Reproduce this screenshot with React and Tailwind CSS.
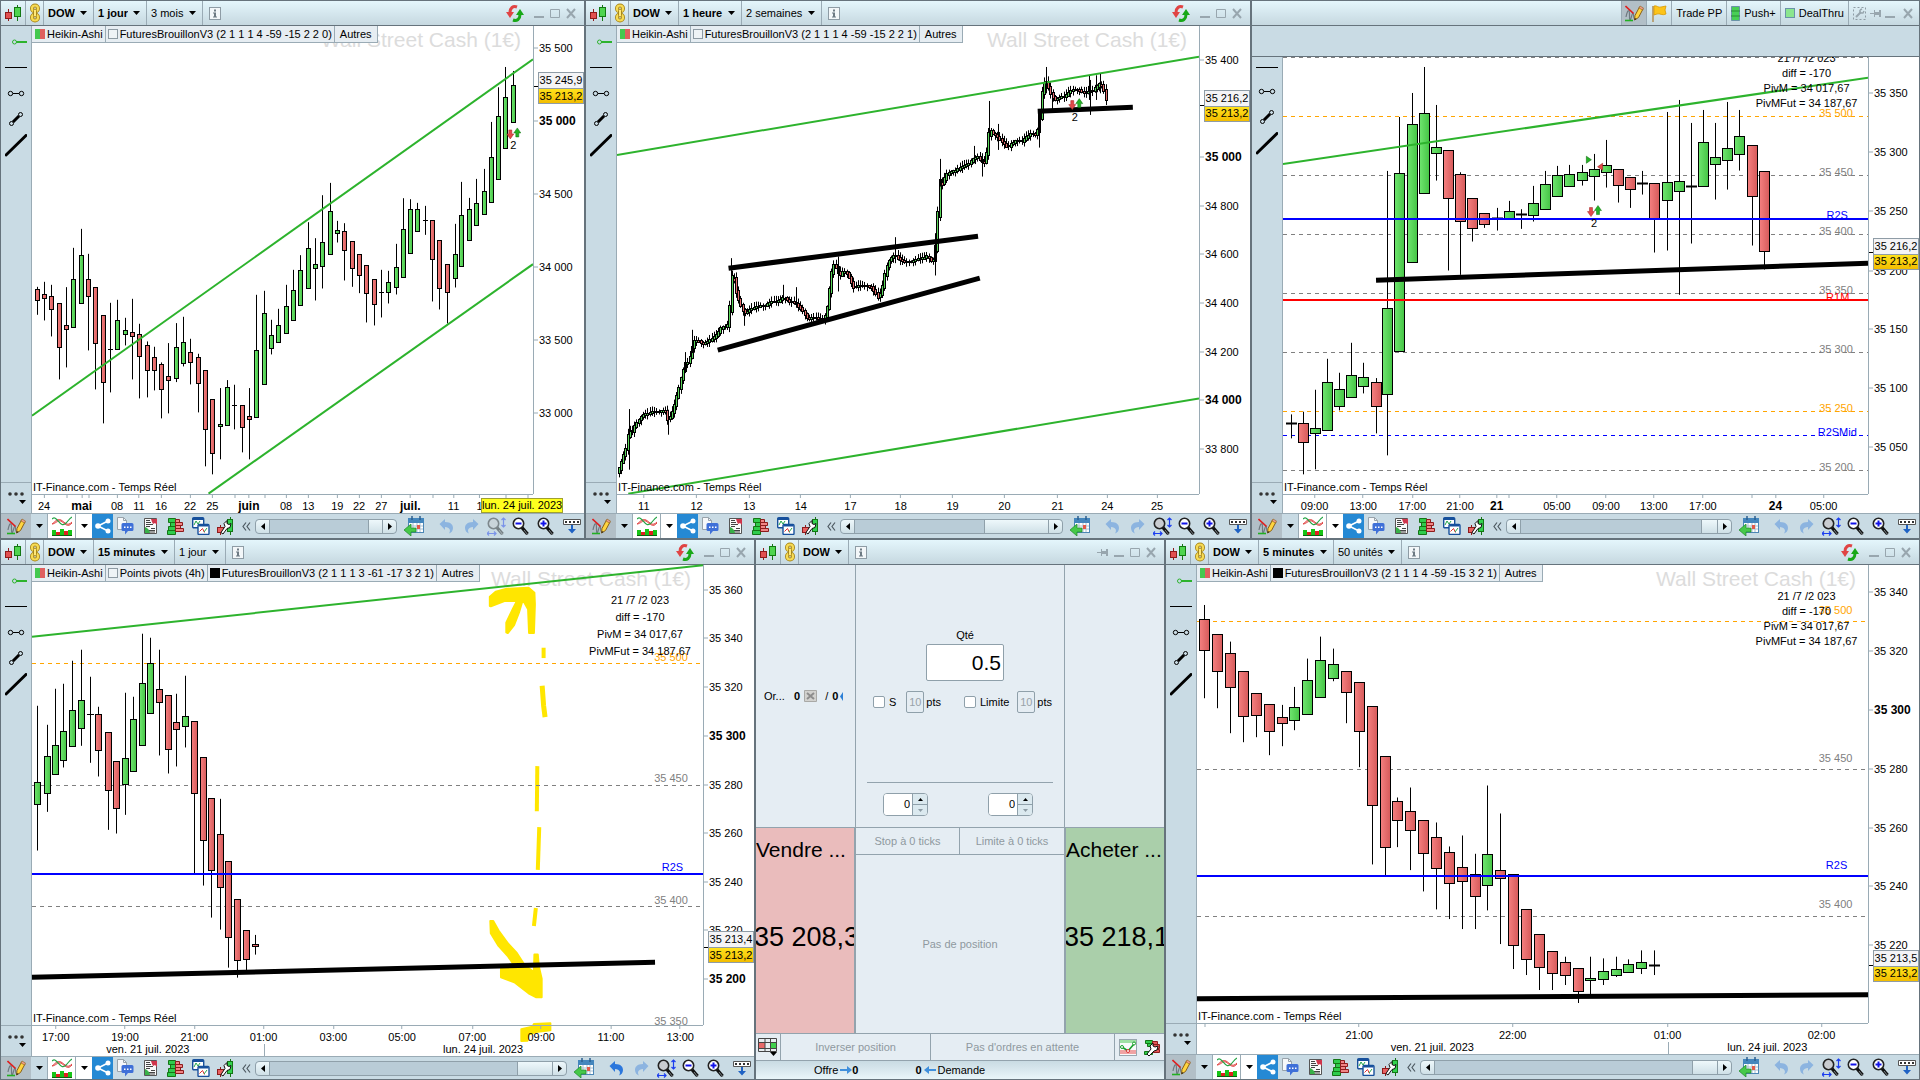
import React from "react";

const G = "g";
const R = "r";
const GREEN = "#2db32d";
const ORANGE = "#ffa500";
const GRAY = "#808080";
const BLUE = "#0000ff";

/* ---------- icons ---------- */

const Caret = ({ className = "" }) => (
  <svg className={className} width="7" height="4" viewBox="0 0 7 4" aria-hidden="true">
    <path d="M0 0h7L3.5 4z" fill="#000" />
  </svg>
);

const CandlesIcon = () => (
  <svg width="16" height="18" viewBox="0 0 16 18" aria-hidden="true">
    <path d="M3.5 5v12" stroke="#8e1b1b" />
    <rect x="0.5" y="8.5" width="6" height="6" fill="#e25050" stroke="#8e1b1b" />
    <path d="M12.5 1v16" stroke="#137813" />
    <rect x="9.5" y="3.5" width="6" height="9" fill="#4fd44f" stroke="#137813" />
  </svg>
);

const ChainIcon = () => (
  <svg width="12" height="20" viewBox="0 0 12 20" aria-hidden="true" fill="none">
    <g stroke="#a8871a" strokeWidth="4">
      <rect x="3" y="2.5" width="6" height="6" rx="3" />
      <rect x="3" y="11.5" width="6" height="6" rx="3" />
    </g>
    <g stroke="#f7dc55" strokeWidth="2.2">
      <rect x="3" y="2.5" width="6" height="6" rx="3" />
      <rect x="3" y="11.5" width="6" height="6" rx="3" />
    </g>
    <rect x="4.5" y="6" width="3" height="8" rx="1.5" fill="#ffe97a" stroke="#a8871a" />
  </svg>
);

const InfoIcon = () => (
  <svg width="12" height="13" viewBox="0 0 12 13" aria-hidden="true">
    <rect x="0.5" y="0.5" width="11" height="12" fill="#f3f7f9" stroke="#8e9ca5" />
    <path d="M5 2.5h2v2H5zM4 5.500h3v4h1v1H4v-1h1v-3H4z" fill="#6d7a83" />
  </svg>
);

const RefreshIcon = () => (
  <svg width="18" height="17" viewBox="0 0 18 17" aria-hidden="true" fill="none">
    <path d="M11 2C7 0.500 4 3 4 7.500" stroke="#e04444" strokeWidth="3" />
    <path d="M0 7h8l-4 6z" fill="#e04444" />
    <path d="M7 15c4 1.500 7-1 7-5.500" stroke="#18a818" strokeWidth="3" />
    <path d="M10 10h8l-4-6z" fill="#18a818" />
  </svg>
);

const MinIcon = () => (
  <svg width="10" height="11" viewBox="0 0 10 11" aria-hidden="true">
    <path d="M0 8h10v2H0z" fill="#98a6ae" />
  </svg>
);
const MaxIcon = () => (
  <svg width="10" height="11" viewBox="0 0 10 11" aria-hidden="true">
    <path d="M0.500 1.500h9v8h-9z" fill="none" stroke="#98a6ae" />
  </svg>
);
const CloseIcon = () => (
  <svg width="10" height="11" viewBox="0 0 10 11" aria-hidden="true">
    <path d="M1 1l8 9M9 1l-8 9" stroke="#98a6ae" strokeWidth="2" />
  </svg>
);
const PinIcon = () => (
  <svg width="11" height="9" viewBox="0 0 11 9" aria-hidden="true">
    <path d="M0 4h4v1H0zM4 1h1v7H4zM5 3h4v3H5zM9 1h2v7H9z" fill="#98a6ae" />
  </svg>
);
const WrenchBoxIcon = () => (
  <svg width="13" height="13" viewBox="0 0 13 13" aria-hidden="true" fill="none">
    <rect x="0.500" y="0.500" width="12" height="12" stroke="#8e9ca5" strokeDasharray="2 2" />
    <path d="M3 10l5-5" stroke="#98a6ae" strokeWidth="2" />
    <path d="M7 3v3h3l1-2M7 3l2-1" stroke="#98a6ae" strokeWidth="1.500" />
  </svg>
);

const PencilIcon = () => (
  <svg width="19" height="17" viewBox="0 0 19 17" aria-hidden="true" fill="none">
    <path d="M1 12c1-5 2-7 3-6s0 9 1 9 2-7 3-7 0 6 2 6" stroke="#6f7a80" strokeWidth="1.200" />
    <path d="M0.500 1l8 7.500" stroke="#e01c1c" strokeWidth="1.600" />
    <path d="M0 15.500h8" stroke="#22b022" strokeWidth="1.600" />
    <path d="M9.500 15l0.500-4.500 4.500-8.500 3.500 2-4.500 8.500z" fill="#ffd53f" stroke="#8a6118" />
    <path d="M14 3l3.500 2 1-2-3.500-2z" fill="#ef9d8c" stroke="#8a6118" strokeWidth="0.600" />
    <path d="M9.500 15.300l0.300-2.300 1.700 1z" fill="#222" />
  </svg>
);

const IndicatorIcon = () => (
  <svg width="20" height="20" viewBox="0 0 20 20" aria-hidden="true" fill="none">
    <path d="M0 8C3 6 5 2 9 4s6 7 11 2v1c-4 5-7 1-11-2-3-1-6 3-9 3z" fill="#f7b1b1" stroke="#e04a4a" />
    <path d="M0 3C4-1 6 7 10 8.500S16 3 20 1" stroke="#22a544" strokeWidth="1.200" />
    <path d="M0 14h4v5H0z M8 13h4v6H8z M16 14h4v5h-4z" fill="#17c417" />
    <path d="M4 16h4v3H4z M12 15h4v4h-4z" fill="#e02020" />
    <path d="M0 19.500h20" stroke="#0c600c" />
  </svg>
);

const ShareIcon = () => (
  <svg width="16" height="16" viewBox="0 0 16 16" aria-hidden="true">
    <path d="M3 8l10-5M3 8l10 5" stroke="#fff" strokeWidth="1.600" />
    <circle cx="3" cy="8" r="2.800" fill="#fff" />
    <circle cx="13" cy="3" r="2.500" fill="#fff" />
    <circle cx="13" cy="13" r="2.500" fill="#fff" />
  </svg>
);

const CommentIcon = () => (
  <svg width="17" height="18" viewBox="0 0 17 18" aria-hidden="true">
    <path d="M0.500 0.500h6l3 3v9h-9z" fill="#f6f8fa" stroke="#98a3ab" />
    <path d="M6.500 0.500v3h3" fill="none" stroke="#98a3ab" />
    <path d="M6 6h9q1.500 0 1.500 1.500v5q0 1.500-1.500 1.500h-4l-3 3.500V14H6q-1.500 0-1.500-1.500v-5Q4.500 6 6 6z" fill="#3f70d8" />
    <path d="M7 9.500h1.500v1.500H7zM10 9.500h1.500v1.500H10zM13 9.500h1.500v1.500H13z" fill="#fff" />
  </svg>
);

const NewsIcon = () => (
  <svg width="14" height="16" viewBox="0 0 14 16" aria-hidden="true">
    <path d="M0.500 0.500h12v15h-12z" fill="#fafafa" stroke="#555" />
    <path d="M2 2.500h4M2 4.500h5M2 6.500h7M2 8.500h4M7 10.500h4M5 12.500h6M5 14h6" stroke="#444" />
    <path d="M7 1h6v6l-2-2-2 1-1-2z" fill="#d0364c" />
    <path d="M1 15V9l2 1 2 2 1 3z" fill="#38b048" />
  </svg>
);

const BookIcon = () => (
  <svg width="17" height="17" viewBox="0 0 17 17" aria-hidden="true">
    <g stroke="#157515" fill="#2fcc4c">
      <path d="M1.500 0.500h7v4h-7zM3.500 4.500h5v4h-5zM1.500 8.500h7v4h-7zM0.500 12.500h8v4h-8z" />
    </g>
    <g stroke="#8d1c1c" fill="#f08585">
      <path d="M8.500 1.500h4v3h-4zM8.500 4.500h7v3h-7zM8.500 7.500h5v3h-5zM8.500 10.500h8v3h-8z" />
    </g>
  </svg>
);

const WindowsIcon = () => (
  <svg width="18" height="18" viewBox="0 0 18 18" aria-hidden="true" fill="none">
    <rect x="0.700" y="0.700" width="11" height="10" rx="1" fill="#fff" stroke="#17509c" strokeWidth="1.400" />
    <path d="M1 2h10" stroke="#17509c" strokeWidth="2" />
    <path d="M2 8l2-4 2 3 2-3" stroke="#23a54a" />
    <rect x="6" y="7.500" width="11" height="10" rx="1" fill="#fff" stroke="#17509c" strokeWidth="1.400" />
    <path d="M6.500 8.500h10" stroke="#17509c" strokeWidth="2" />
    <path d="M7.500 14.500l3-3 2 4" stroke="#d33" />
    <path d="M12 15l3-4" stroke="#23a54a" />
  </svg>
);

const TradeIcon = () => (
  <svg width="17" height="18" viewBox="0 0 17 18" aria-hidden="true">
    <path d="M13.500 0v18" stroke="#157515" />
    <rect x="10.500" y="2.500" width="5" height="12" fill="#33d24e" stroke="#157515" />
    <path d="M3.500 8v10" stroke="#8d1c1c" />
    <rect x="0.500" y="10.500" width="6" height="5" fill="#e96060" stroke="#8d1c1c" />
    <path d="M4 15.500l4-6-1-3 3-3v3l2 1 2-1-1 4-3 1-4 5.500z" fill="#fff" stroke="#111" />
  </svg>
);

const CalendarIcon = () => (
  <svg width="20" height="20" viewBox="0 0 20 20" aria-hidden="true">
    <rect x="4.500" y="2.500" width="15" height="14" fill="#fff" stroke="#4c86b5" />
    <path d="M4 2h16v5H4z" fill="#4486bd" />
    <path d="M8 0v4M16 0v4" stroke="#2b5f8e" strokeWidth="1.500" />
    <path d="M5 10h14M5 13h14M9 7v9M13 7v9M16 7v9" stroke="#a9bfd0" />
    <path d="M13 9h3v4h-3z" fill="#e25a4a" />
    <path d="M0 14l7-6v4h5v4H7v4z" fill="#46c84a" stroke="#1c8a26" strokeWidth="0.700" />
  </svg>
);

const UndoIcon = ({ on, flip }) => (
  <svg width="15" height="15" viewBox="0 0 15 15" aria-hidden="true" className={flip ? "-scale-x-100" : ""}>
    <path
      d="M0.500 5L6 0v3c6 0 8 3 8 6 0 3-2 5-4 5.500 2-3 1-6-4-6.500v3z"
      fill={on ? "#2b77dc" : "#8cb4e0"}
    />
  </svg>
);

const Lens = ({ sign, fit, muted }) => (
  <svg width="19" height="19" viewBox="0 0 19 19" aria-hidden="true" fill="none" opacity={muted ? 0.450 : 1}>
    <path d="M9.500 10l6 7" stroke="#111" strokeWidth="3.400" />
    <path d="M12 13l4 5" stroke="#7d858a" strokeWidth="1" />
    <circle cx="6.500" cy="6.500" r="5.200" fill={fit ? "#c9ccd0" : "#fff"} stroke="#222" strokeWidth="1.600" />
    {sign && <path d="M3.500 6.500h6" stroke="#1212e8" strokeWidth="2" />}
    {sign === "+" && <path d="M6.500 3.500v6" stroke="#1212e8" strokeWidth="2" />}
    {fit && (
      <path
        d="M16.500 1v9M14.500 3l2-2 2 2M14.500 8l2 2 2-2M0 16.500h9M2 14.500l-2 2 2 2M7 14.500l2 2-2 2"
        stroke="#1b3df0"
        strokeWidth="1.200"
      />
    )}
  </svg>
);

const KeyboardIcon = () => (
  <svg width="18" height="15" viewBox="0 0 18 15" aria-hidden="true">
    <path d="M0.500 0.500h17v5h-17z" fill="#fff" stroke="#555" />
    <path d="M2 2h2v2H2zM6 2h2v2H6zM10 2h2v2h-2zM14 2h2v2h-2z" fill="#333" />
    <path d="M8 6h2v4h3l-4 4.500L5 10h3z" fill="#1f62c4" />
  </svg>
);

const FlagIcon = () => (
  <svg width="16" height="17" viewBox="0 0 16 17" aria-hidden="true">
    <path d="M1 1h2v16H1z" fill="#b9a37a" />
    <path d="M3 1c3-1 4 2 7 1l5-1-1 4 1 4c-4 2-6-1-9 0l-3 1z" fill="#fcc419" stroke="#d99a00" strokeWidth="0.800" />
  </svg>
);

const GridMenuIcon = () => (
  <svg width="20" height="18" viewBox="0 0 20 18" aria-hidden="true">
    <path d="M0.500 0.500h18v13h-18z" fill="#e9eef2" stroke="#444" />
    <path d="M1 5h6v5H1z" fill="#e86a6a" />
    <path d="M13 5h5v5h-5z" fill="#3fcf4c" />
    <path d="M0 4.500h19M0 10.500h19M7 0v14M12.500 0v14" stroke="#444" fill="none" />
    <path d="M12 14h7l-3.500 4z" fill="#000" />
  </svg>
);

const MiniChartIcon = () => (
  <svg width="18" height="17" viewBox="0 0 18 17" aria-hidden="true" fill="none">
    <rect x="0.500" y="0.500" width="17" height="16" fill="#f8fafb" stroke="#98a6ae" />
    <path d="M1 2.500h16" stroke="#9fe0a4" strokeWidth="3" />
    <path d="M1 13h16" stroke="#f0a3a3" strokeWidth="4" />
    <path d="M3 8l6 4 6-7" stroke="#17a02a" strokeWidth="1.600" />
    <circle cx="3" cy="8" r="1.500" fill="#fff" stroke="#17a02a" />
    <circle cx="15" cy="4.500" r="1.500" fill="#fff" stroke="#17a02a" />
    <circle cx="9" cy="12" r="1.500" fill="#fff" stroke="#d33" />
  </svg>
);

const BookWrenchIcon = () => (
  <svg width="17" height="17" viewBox="0 0 17 17" aria-hidden="true">
    <path d="M1.500 1.500h7v3h-7zM3.500 4.500h5v3h-5zM0.500 12.500h8v3h-8z" fill="#2fcc4c" stroke="#157515" />
    <path d="M8.500 2.500h5v3h-5zM8.500 5.500h7v4h-7zM8.500 10.500h7v3h-7z" fill="#e35555" stroke="#8d1c1c" />
    <path d="M3 15l4-5-1-3 3-3v3l2 1 3-1-1 4-3 1-5 5z" fill="#fff" stroke="#111" />
  </svg>
);

const BlueArrow = ({ left }) => (
  <svg width="12" height="8" viewBox="0 0 12 8" aria-hidden="true" className={left ? "-scale-x-100" : ""}>
    <path d="M0 3h7V0l5 4-5 4V5H0z" fill="#3f8fdc" />
  </svg>
);

/* ---------- drawing-tool icons in the side strip ---------- */

const toolIcons = {
  handle: (
    <svg width="22" height="24" viewBox="0 0 22 24" aria-hidden="true" fill="none">
      <path d="M11 12h11" stroke={GREEN} strokeWidth="2" />
      <circle cx="9.500" cy="12" r="2" stroke={GREEN} />
    </svg>
  ),
  line: (
    <svg width="22" height="24" viewBox="0 0 22 24" aria-hidden="true">
      <path d="M0 11.500h22" stroke="#000" />
    </svg>
  ),
  segment: (
    <svg width="22" height="24" viewBox="0 0 22 24" aria-hidden="true" fill="none" stroke="#000">
      <path d="M8 11.500h6" />
      <circle cx="5.500" cy="11.500" r="2.200" />
      <circle cx="16.500" cy="11.500" r="2.200" />
    </svg>
  ),
  diagonal: (
    <svg width="22" height="24" viewBox="0 0 22 24" aria-hidden="true" fill="none" stroke="#000">
      <path d="M8 14l6-6" strokeWidth="3" />
      <circle cx="6.500" cy="15.500" r="2" />
      <circle cx="15.500" cy="6.500" r="2" />
    </svg>
  ),
  thick: (
    <svg width="22" height="24" viewBox="0 0 22 24" aria-hidden="true">
      <path d="M1 21L21 1.500" stroke="#000" strokeWidth="3" strokeLinecap="round" />
    </svg>
  ),
};

/* ---------- window chrome ---------- */

const Picker = ({ label, value, bold }) => (
  <label className="relative flex h-full items-center border-r border-[#9aabb5] pr-1.5 pl-1">
    <select
      aria-label={label}
      className={
        bold
          ? "appearance-none bg-transparent pr-3 font-bold outline-none"
          : "appearance-none bg-transparent pr-3 outline-none"
      }
      defaultValue={value}
    >
      <option>{value}</option>
    </select>
    <Caret className="pointer-events-none absolute right-1.5" />
  </label>
);

const headerClass =
  "flex h-[25px] shrink-0 items-center border-b border-[#66737c] bg-linear-to-b from-[#e4f6fc] to-[#c6d8e0]";

const HeaderLeft = ({ frame, span }) => (
  <>
    <button aria-label="Type de graphique" className="flex h-full w-[25px] items-center justify-center border-r border-[#9aabb5]">
      <CandlesIcon />
    </button>
    <button aria-label="Lier" className="flex h-full w-[18px] items-center justify-center border-r border-[#9aabb5]">
      <ChainIcon />
    </button>
    <Picker label="Instrument" value="DOW" bold />
    {frame && <Picker label="Unité de temps" value={frame} bold />}
    {span && <Picker label="Période" value={span} />}
    <button aria-label="Informations" className="ml-1.5">
      <InfoIcon />
    </button>
  </>
);

const WindowButtons = ({ pin }) => (
  <div className="ml-auto flex items-center gap-1.5 pr-2">
    {pin ? (
      <button aria-label="Épingler" className="px-0">
        <PinIcon />
      </button>
    ) : (
      <button aria-label="Actualiser" className="mr-1">
        <RefreshIcon />
      </button>
    )}
    <button aria-label="Réduire"><MinIcon /></button>
    <button aria-label="Agrandir"><MaxIcon /></button>
    <button aria-label="Fermer"><CloseIcon /></button>
  </div>
);

const Swatch = ({ kind }) => {
  if (kind === "ha")
    return (
      <span className="flex h-[10px] w-[10px]">
        <span className="flex-1 bg-[#45c84f]" />
        <span className="flex-1 bg-[#df5f5f]" />
      </span>
    );
  if (kind === "black") return <span className="h-[10px] w-[10px] bg-black" />;
  return <span className="h-[10px] w-[10px] border border-[#8d9aa3] bg-[#eef3f6]" />;
};

const Legend = ({ items }) => (
  <div className="absolute top-0 left-0 z-10 flex h-[17px] border-b border-[#9aabb5] bg-[#e6edf2] pl-px">
    {items.map(([kind, text]) => (
      <button key={text} className="flex items-center gap-0.5 border-r border-[#9aabb5] px-0.5 whitespace-nowrap">
        {kind && <Swatch kind={kind} />}
        <span className={kind ? "" : "px-[3px]"}>{text}</span>
      </button>
    ))}
  </div>
);

const Sidebar = ({ tools, first }) => (
  <div className="row-span-2 flex min-h-0 flex-col border-r border-[#9aabb5] bg-[#c9dbe4]">
    <div className={first ? "flex flex-1 flex-col items-center pt-[3px]" : "flex flex-1 flex-col items-center"}>
      {tools.map((t) => (
        <button key={t} aria-label={t} className={first ? "flex h-[26px] items-center" : "flex h-[26px] items-center first:h-[22px]"}>
          {toolIcons[t]}
        </button>
      ))}
    </div>
    <button
      aria-label="Autres outils"
      className="flex h-[31px] flex-col items-center justify-center gap-1 border-t border-[#9aabb5]"
    >
      <svg width="16" height="4" viewBox="0 0 16 4" aria-hidden="true" fill="#333">
        <circle cx="2" cy="2" r="1.800" />
        <circle cx="8" cy="2" r="1.800" />
        <circle cx="14" cy="2" r="1.800" />
      </svg>
      <Caret className="ml-3" />
    </button>
  </div>
);

const Tool = ({ label, children }) => (
  <button aria-label={label} className="flex h-full w-[25px] items-center justify-center">
    {children}
  </button>
);

const Toolbar = ({ thumb, undo, fitMuted, short }) => (
  <div
    className={
      short
        ? "flex h-[23px] shrink-0 items-center overflow-hidden border-t border-[#9aabb5] bg-[#c9dbe4]"
        : "flex h-[25px] shrink-0 items-center overflow-hidden border-t border-[#9aabb5] bg-[#c9dbe4]"
    }
  >
    <button aria-label="Dessiner" className="flex h-full w-[30px] items-center justify-center bg-[#b2bfc7]">
      <PencilIcon />
    </button>
    <button aria-label="Options de dessin" className="flex h-full w-4 items-center justify-center">
      <Caret />
    </button>
    <button aria-label="Indicateurs" className="flex h-full w-[29px] items-center justify-center border-x border-[#9aabb5] bg-white">
      <IndicatorIcon />
    </button>
    <button aria-label="Options d'indicateurs" className="flex h-full w-4 items-center justify-center bg-white">
      <Caret />
    </button>
    <button aria-label="Partager" className="flex h-full w-[21px] items-center justify-center bg-[#2589d4]">
      <ShareIcon />
    </button>
    <Tool label="Commentaires"><CommentIcon /></Tool>
    <Tool label="Actualités"><NewsIcon /></Tool>
    <Tool label="Carnet d'ordres"><BookIcon /></Tool>
    <Tool label="Fenêtres"><WindowsIcon /></Tool>
    <Tool label="Trading"><TradeIcon /></Tool>
    <button aria-label="Replier" className="flex h-full w-[17px] items-center justify-center">
      <svg width="9" height="9" viewBox="0 0 9 9" aria-hidden="true" fill="none" stroke="#4d5961" strokeWidth="1.200">
        <path d="M4 0.500L1 4.500l3 4M8 0.500L5 4.500l3 4" />
      </svg>
    </button>
    <div className="flex h-[15px] min-w-0 flex-1 rounded-sm border border-[#8fa0aa] bg-[#b9ccd7]">
      <button aria-label="Défiler à gauche" className="flex w-[14px] items-center justify-center rounded-l-sm border-r border-[#8fa0aa] bg-linear-to-b from-[#eef8fb] to-[#cfe0e7]">
        <svg width="4" height="7" viewBox="0 0 4 7" aria-hidden="true"><path d="M4 0v7L0 3.500z" /></svg>
      </button>
      <div className="flex min-w-0 flex-1 justify-end">
        <div
          className="border-l border-[#8fa0aa] bg-linear-to-b from-[#eef8fb] to-[#cfe0e7]"
          style={{ width: thumb }}
        />
      </div>
      <button aria-label="Défiler à droite" className="flex w-[14px] items-center justify-center rounded-r-sm border-l border-[#8fa0aa] bg-linear-to-b from-[#eef8fb] to-[#cfe0e7]">
        <svg width="4" height="7" viewBox="0 0 4 7" aria-hidden="true"><path d="M0 0v7l4-3.500z" /></svg>
      </button>
    </div>
    <div className="flex h-full items-center pl-1">
      <Tool label="Aller à la date"><CalendarIcon /></Tool>
      <span className="w-2" />
      <Tool label="Annuler"><UndoIcon on={undo} /></Tool>
      <Tool label="Rétablir"><UndoIcon flip /></Tool>
      <Tool label="Zoom automatique"><Lens fit muted={fitMuted} /></Tool>
      <Tool label="Zoom arrière"><Lens sign="-" /></Tool>
      <Tool label="Zoom avant"><Lens sign="+" /></Tool>
      <Tool label="Clavier"><KeyboardIcon /></Tool>
    </div>
  </div>
);

/* ---------- chart ---------- */

function makeScale({ x0, x1, y0, y1, w, h }) {
  return {
    px: (x) => ((x - x0) / (x1 - x0)) * w,
    py: (y) => ((y - y0) / (y1 - y0)) * h,
    left: (x) => `${((x - x0) / (x1 - x0)) * 100}%`,
    top: (y) => `${((y - y0) / (y1 - y0)) * 100}%`,
  };
}

/* one candle: [x, high, top, bottom, low, colour] */
const Candle = ({ s, c, bw, id }) => {
  const [x, hi, t, b, lo, col] = c;
  const cx = Math.round(s.px(x) - 0.5) + 0.5;
  const ty = Math.round(s.py(t) - 0.5) + 0.5;
  const by = Math.round(s.py(b) - 0.5) + 0.5;
  const half = Math.floor(bw / 2);
  return (
    <g>
      <path d={`M${cx} ${s.py(hi)}V${s.py(lo)}`} stroke="#000" />
      {col === "d" ? (
        <path d={`M${cx - half - 0.5} ${ty}h${half * 2 + 1}`} stroke="#000" strokeWidth={bw > 7 ? 2 : 1} />
      ) : (
        <rect
          x={cx - half}
          y={ty}
          width={half * 2}
          height={Math.max(by - ty, 1)}
          fill={`url(#${id}-${col})`}
          stroke="#000"
        />
      )}
    </g>
  );
};

const OrderMark = ({ x, y }) => (
  <g transform={`translate(${x} ${y})`}>
    <path d="M-5-4h3v4h2l-3.500 5L-7 0h2z" fill="#e24a4a" stroke="#a02020" strokeWidth="0.500" />
    <path d="M2 3h3V-1h2L3.500-6 0-1h2z" fill="#25b325" stroke="#107010" strokeWidth="0.500" />
  </g>
);

const Chart = ({ id, dom, candles, bw, lines = [], levels = [], labels = [], info, legend, title, under, marks, prices, tags, times, days, dayTag, axisH, sidebar, curTick }) => {
  const s = makeScale(dom);
  return (
    <div
      className={
        axisH === 2
          ? "grid min-h-0 flex-1 grid-cols-[31px_minmax(0,1fr)_51px] grid-rows-[minmax(0,1fr)_31px] bg-white"
          : "grid min-h-0 flex-1 grid-cols-[31px_minmax(0,1fr)_51px] grid-rows-[minmax(0,1fr)_19px] bg-white"
      }
    >
      {sidebar}
      <div className="relative min-h-0 min-w-0">
        {title && (
          <div className="absolute top-0.5 right-3 text-[21px] leading-[24px] whitespace-nowrap text-[#dcdcdc]">
            Wall Street Cash (1€)
          </div>
        )}
        <svg
          className={under ? "absolute inset-0 h-full w-full overflow-visible" : "absolute inset-0 h-full w-full"}
          viewBox={`0 0 ${dom.w} ${dom.h}`}
          preserveAspectRatio="none"
          aria-label="Wall Street Cash"
        >
          <defs>
            <linearGradient id={`${id}-g`}>
              <stop offset="0" stopColor="#6fe66f" />
              <stop offset="1" stopColor="#45c445" />
            </linearGradient>
            <linearGradient id={`${id}-r`}>
              <stop offset="0" stopColor="#f58080" />
              <stop offset="1" stopColor="#d65a5a" />
            </linearGradient>
          </defs>
          {under && under(s)}
          {levels.filter((l) => l[2] === "dash").map(([y, color]) => (
            <path key={y} d={`M0 ${Math.round(s.py(y)) + 0.5}H${dom.w}`} stroke={color} strokeDasharray="4 4" />
          ))}
          {candles.map((c, i) => (
            <Candle key={i} s={s} c={c} bw={bw} id={id} />
          ))}
          {levels.filter((l) => l[2] !== "dash").map(([y, color]) => (
            <path key={y} d={`M0 ${Math.round(s.py(y))}H${dom.w}`} stroke={color} strokeWidth="2" />
          ))}
          {lines.map(([xa, ya, xb, yb, color, sw], i) => (
            <path key={i} d={`M${s.px(xa)} ${s.py(ya)}L${s.px(xb)} ${s.py(yb)}`} stroke={color} strokeWidth={sw} />
          ))}
          {marks && marks(s)}
        </svg>
        <div className="absolute inset-0 overflow-hidden">
          {labels.map(([x, y, text, color]) => (
            <span
              key={text}
              className="absolute -translate-x-1/2 -translate-y-1/2 whitespace-nowrap"
              style={{ left: s.left(x), top: s.top(y), color }}
            >
              {text}
            </span>
          ))}
          {info &&
            ["21 /7 /2 023", "diff = -170", "PivM = 34 017,67", "PivMFut = 34 187,67"].map((t, i) => (
              <span
                key={t}
                className="absolute -translate-x-1/2 -translate-y-1/2 whitespace-nowrap"
                style={{ left: s.left(info.x), top: s.top(info.y + i * info.step) }}
              >
                {t}
              </span>
            ))}
          <span className="absolute bottom-0 left-px">IT-Finance.com - Temps Réel</span>
        </div>
        {legend && <Legend items={legend} />}
      </div>
      <div className="relative min-h-0 border-l border-[#9aabb5]">
        {prices.map(([y, text, bold]) => (
          <div key={text} className="absolute left-0 flex -translate-y-1/2 items-center gap-px" style={{ top: s.top(y) }}>
            <span className="h-px w-1 bg-[#9aabb5]" />
            <span className={bold ? "text-xs leading-[13px] font-bold whitespace-nowrap" : "whitespace-nowrap"}>{text}</span>
          </div>
        ))}
        <span className="absolute left-0 h-px w-1 bg-black" style={{ top: s.top(curTick) }} />
        <div className="absolute inset-x-0 ml-1" style={{ top: s.top(tags.y) }}>
          <div className="flex h-4 items-center justify-center border border-b-0 border-[#8f9ca6] bg-[#f4f4f6] whitespace-nowrap">{tags.last}</div>
          <div className="flex h-4 items-center justify-center border border-[#8f9ca6] bg-linear-to-b from-[#ffe21a] to-[#f3bd00] whitespace-nowrap">35 213,2</div>
        </div>
      </div>
      <div className="relative border-t border-[#9aabb5]">
        {times.map(([x, text, bold]) => (
          <div key={x} className="absolute top-0 flex -translate-x-1/2 flex-col items-center" style={{ left: s.left(x) }}>
            <span className="h-[3px] w-px bg-[#9aabb5]" />
            <span className={bold ? "mt-0.5 text-xs leading-[13px] font-bold" : "mt-0.5"}>{text}</span>
          </div>
        ))}
        {days &&
          days.map(([x, text]) =>
            text ? (
              <span key={x} className="absolute bottom-0 -translate-x-1/2 whitespace-nowrap" style={{ left: s.left(x) }}>
                {text}
              </span>
            ) : (
              <span key={x} className="absolute bottom-0 h-3 w-px bg-[#9aabb5]" style={{ left: s.left(x) }} />
            )
          )}
        {dayTag && (
          <span
            className="absolute bottom-0 z-10 border border-[#a0a030] bg-[#ffff1e] whitespace-nowrap"
            style={{ left: s.left(dayTag[0]) }}
          >
            {dayTag[1]}
          </span>
        )}
      </div>
      <div />
    </div>
  );
};

const ALL_TOOLS = ["handle", "line", "segment", "diagonal", "thick"];

const ChartWindow = ({ frame, span, toolbar, ...chart }) => (
  <section className="flex min-h-0 min-w-0 flex-col bg-white">
    <header className={headerClass}>
      <HeaderLeft frame={frame} span={span} />
      <WindowButtons />
    </header>
    <Chart title sidebar={<Sidebar tools={ALL_TOOLS} first />} {...chart} />
    <Toolbar {...toolbar} />
  </section>
);

/* ---------- data ---------- */

const dailyCandles = [
  [99, 861, 868, 902, 945, R], [118, 846, 885, 896, 962, R], [137, 855, 889, 929, 1010, R],
  [158, 910, 910, 1042, 1139, R], [176, 862, 976, 988, 1103, R], [195, 744, 838, 982, 982, G],
  [216, 687, 766, 910, 910, G], [235, 762, 838, 889, 1052, R], [253, 862, 862, 1031, 1169, R],
  [275, 946, 946, 1148, 1271, R], [293, 909, 1048, 1048, 1178, "d"], [312, 900, 961, 1048, 1048, G],
  [333, 954, 991, 1003, 1037, G], [351, 897, 997, 1009, 1139, R], [370, 972, 1003, 1070, 1196, R],
  [391, 1025, 1036, 1112, 1193, R], [410, 1041, 1072, 1112, 1172, R], [429, 1088, 1093, 1169, 1256, R],
  [447, 1030, 1129, 1141, 1241, R], [469, 970, 1042, 1136, 1147, G], [487, 951, 1027, 1091, 1100, G],
  [506, 1017, 1057, 1088, 1154, R], [527, 1062, 1072, 1151, 1238, R], [545, 1111, 1111, 1288, 1400, R],
  [564, 1198, 1198, 1361, 1424, R], [586, 1165, 1273, 1281, 1379, G], [604, 1141, 1162, 1277, 1277, G],
  [623, 1155, 1218, 1218, 1289, "d"], [644, 1216, 1216, 1283, 1358, R], [662, 1165, 1249, 1259, 1379, R],
  [681, 885, 1051, 1253, 1253, G], [703, 873, 940, 1153, 1153, G], [721, 960, 1006, 1046, 1064, G],
  [740, 927, 976, 1028, 1028, G], [761, 855, 919, 1000, 1000, G], [779, 810, 871, 961, 961, G],
  [798, 766, 811, 916, 916, G], [819, 667, 745, 865, 865, G], [838, 715, 793, 806, 902, G],
  [857, 586, 728, 799, 866, G], [878, 549, 634, 763, 763, G], [896, 663, 691, 700, 728, G],
  [915, 670, 694, 751, 842, R], [936, 724, 724, 805, 861, R], [955, 763, 763, 826, 880, R],
  [973, 796, 796, 881, 968, R], [995, 838, 838, 913, 977, R], [1013, 810, 877, 877, 953, "d"],
  [1032, 813, 847, 877, 911, G], [1053, 732, 802, 862, 884, G], [1072, 595, 688, 832, 832, G],
  [1090, 598, 628, 760, 760, G], [1109, 609, 628, 694, 694, G], [1130, 618, 661, 661, 705, "d"],
  [1149, 661, 661, 778, 905, R], [1167, 721, 721, 865, 929, R], [1189, 793, 793, 877, 971, R],
  [1208, 672, 763, 835, 863, G], [1226, 546, 646, 799, 799, G], [1247, 594, 628, 721, 721, G],
  [1266, 537, 610, 676, 676, G], [1285, 507, 574, 643, 643, G], [1306, 366, 472, 607, 607, G],
  [1324, 262, 349, 538, 538, G], [1343, 201, 292, 445, 445, G], [1364, 213, 256, 367, 367, G],
];

const hourPath = [
  [84, 1420], [88, 1400], [95, 1375], [103, 1345], [109, 1290], [116, 1300], [124, 1275], [132, 1262], [140, 1248], [150, 1243],
  [165, 1236], [182, 1236], [193, 1230], [200, 1262], [206, 1250], [213, 1225], [220, 1190], [226, 1160],
  [233, 1120], [240, 1090], [248, 1088], [254, 1050], [260, 1025], [268, 1022], [280, 1032], [290, 1028],
  [300, 1018], [310, 1010], [318, 995], [325, 980], [337, 982], [342, 940], [346, 850], [350, 810], [354, 850],
  [360, 890], [368, 915], [376, 940], [384, 935], [395, 925], [410, 920], [425, 917], [440, 905], [455, 905],
  [468, 893], [480, 905], [492, 908], [502, 920], [513, 935], [523, 957], [533, 955], [545, 955], [557, 960],
  [565, 945], [571, 900], [576, 830], [583, 795], [590, 805], [597, 830], [605, 815], [612, 815], [620, 835],
  [630, 865], [640, 858], [655, 858], [670, 862], [680, 880], [687, 895], [694, 875], [700, 830], [708, 790],
  [715, 775], [725, 765], [735, 780], [748, 787], [765, 785], [778, 778], [790, 775], [800, 768], [812, 790],
  [818, 760], [821, 700], [825, 620], [829, 540], [835, 555], [842, 525], [852, 518], [865, 512], [880, 500],
  [895, 492], [905, 478], [915, 470], [925, 485], [933, 490], [938, 450], [943, 385], [950, 400], [962, 410],
  [972, 425], [985, 442], [995, 430], [1005, 422], [1018, 425], [1030, 410], [1042, 400], [1052, 405],
  [1058, 370], [1063, 290], [1068, 250], [1075, 245], [1083, 275], [1093, 300], [1105, 293], [1118, 290],
  [1128, 275], [1140, 268], [1150, 270], [1162, 280], [1172, 275], [1182, 272], [1190, 262], [1200, 250],
  [1208, 270], [1216, 315],
];

/* long wicks: x, high, low */
const hourSpikes = [
  [109, 1228, 1410], [200, 1230, 1305], [239, 1057, 1120], [255, 990, 1060], [346, 775, 900], [375, 920, 978],
  [465, 855, 900], [495, 862, 920], [592, 770, 875], [725, 712, 790], [818, 700, 827], [828, 477, 560],
  [907, 438, 490], [926, 460, 530], [942, 303, 400], [962, 372, 450], [1057, 330, 443], [1073, 201, 280],
  [1088, 280, 330], [1174, 228, 300], [1177, 240, 345], [1190, 226, 300], [1198, 222, 280],
];

function hourAt(x) {
  let i = 1;
  while (i < hourPath.length - 1 && hourPath[i][0] < x) i += 1;
  const [xa, ya] = hourPath[i - 1];
  const [xb, yb] = hourPath[i];
  return ya + ((yb - ya) * (x - xa)) / (xb - xa);
}

const hourCandles = [];
for (let i = 0; 87 + i * 5.12 <= 1216; i += 1) {
  const x = 87 + i * 5.12;
  const a = hourAt(Math.max(84, x - 6));
  const b = hourAt(x);
  const t = Math.min(a, b) - 1;
  const bt = Math.max(a, b) + 2;
  const up = 2 + Math.abs(Math.sin(i * 12.9)) * 14;
  const dn = 1 + Math.abs(Math.sin(i * 7.3 + 1)) * 12;
  hourCandles.push([x, t - up, t, bt, bt + dn, b <= a ? G : R]);
}

const mainCandles = [
  [95, 1244, 1272, 1272, 1316, "d"], [123, 1236, 1270, 1327, 1424, R], [151, 1170, 1285, 1300, 1409, G],
  [181, 1077, 1147, 1291, 1291, G], [209, 1119, 1169, 1219, 1232, G], [237, 1029, 1126, 1192, 1192, G],
  [265, 1089, 1132, 1160, 1181, G], [294, 1135, 1147, 1219, 1301, R], [322, 513, 925, 1183, 1367, G],
  [350, 351, 520, 1054, 1054, G], [380, 279, 373, 787, 787, G], [408, 201, 340, 580, 580, G],
  [436, 315, 442, 460, 542, G], [464, 451, 451, 595, 812, R], [492, 517, 523, 664, 825, R],
  [521, 595, 595, 685, 725, R], [548, 640, 640, 673, 684, R], [579, 624, 657, 657, 692, "d"],
  [607, 603, 634, 655, 655, G], [635, 628, 645, 645, 687, "d"], [663, 558, 610, 646, 665, G],
  [692, 513, 553, 628, 628, G], [720, 498, 526, 589, 589, G], [748, 495, 523, 559, 559, G],
  [778, 495, 517, 541, 557, G], [806, 462, 508, 529, 602, G], [834, 420, 496, 517, 563, G],
  [862, 508, 508, 556, 608, R], [890, 532, 532, 568, 624, R], [918, 513, 550, 550, 584, "d"],
  [947, 550, 550, 656, 758, R], [976, 336, 547, 601, 752, G], [1005, 300, 544, 574, 885, G],
  [1033, 369, 559, 559, 731, "d"], [1061, 330, 427, 559, 559, G], [1089, 369, 472, 493, 599, G],
  [1118, 306, 445, 482, 569, G], [1146, 330, 409, 463, 512, G], [1176, 436, 436, 589, 737, R],
  [1204, 514, 514, 754, 809, R],
];

const quarterCandles = [
  [77, 504, 733, 799, 938, G], [96, 561, 655, 766, 822, G], [114, 453, 622, 709, 709, G], [131, 438, 580, 667, 689, G],
  [149, 369, 517, 625, 625, G], [168, 336, 487, 571, 624, G], [185, 417, 531, 531, 675, "d"], [203, 507, 529, 637, 716, R],
  [222, 583, 583, 757, 876, R], [240, 670, 670, 812, 887, R], [257, 465, 661, 739, 831, G], [275, 477, 544, 700, 700, G],
  [293, 288, 436, 622, 622, G], [310, 300, 376, 528, 528, G], [329, 336, 454, 493, 653, R], [347, 472, 472, 634, 707, R],
  [364, 468, 553, 574, 686, R], [382, 414, 535, 565, 629, G], [401, 550, 550, 766, 1007, R], [418, 658, 658, 908, 1043, R],
  [436, 781, 781, 998, 1139, R], [455, 783, 889, 1049, 1175, R], [471, 970, 970, 1199, 1289, R],
  [490, 1084, 1084, 1267, 1319, R], [508, 1177, 1177, 1264, 1296, R], [527, 1191, 1219, 1226, 1250, R],
];

const fiveCandles = [
  [92, 202, 247, 338, 482, R], [119, 291, 292, 403, 512, R], [145, 312, 349, 451, 587, R], [172, 401, 401, 538, 614, R],
  [199, 469, 469, 535, 599, R], [226, 502, 502, 583, 653, R], [252, 502, 541, 559, 626, R], [277, 448, 511, 550, 578, G],
  [304, 363, 430, 532, 532, G], [331, 297, 370, 481, 481, G], [358, 333, 382, 424, 431, G], [384, 403, 403, 466, 557, R],
  [411, 436, 436, 583, 689, R], [438, 508, 508, 805, 981, R], [465, 658, 658, 929, 1014, R], [490, 780, 793, 850, 929, R],
  [516, 750, 823, 880, 998, R], [544, 850, 850, 949, 1062, R], [570, 855, 901, 992, 1116, R], [597, 927, 946, 1039, 1145, R],
  [624, 894, 991, 1033, 1175, R], [651, 949, 1012, 1076, 1175, R], [676, 744, 952, 1045, 1119, G],
  [702, 828, 1000, 1024, 1220, R], [729, 1012, 1012, 1225, 1295, R], [756, 1117, 1117, 1267, 1313, R],
  [783, 1192, 1192, 1291, 1358, R], [810, 1243, 1243, 1309, 1358, R], [837, 1258, 1276, 1315, 1343, R],
  [863, 1294, 1294, 1363, 1397, R], [888, 1258, 1324, 1330, 1370, G], [915, 1263, 1303, 1327, 1343, G],
  [942, 1258, 1297, 1315, 1319, G], [968, 1266, 1282, 1306, 1306, G], [995, 1239, 1276, 1294, 1310, G],
  [1022, 1239, 1284, 1284, 1313, "d"],
];

const marker = "#ffe600";

const drawHighlighter = (s) => {
  const pts = (list) => list.map(([x, y]) => `${s.px(x)},${s.py(y)}`).join(" ");
  return (
    <g fill={marker} stroke={marker} strokeWidth="2" strokeLinejoin="round">
      <polygon points={pts([[1010, 205], [1010, 177], [1022, 162], [1045, 153], [1090, 150], [1102, 165], [1103, 200], [1101, 286], [1091, 286], [1089, 215], [1078, 186], [1070, 225], [1060, 262], [1047, 286], [1044, 284], [1044, 255], [1058, 212], [1066, 190], [1040, 190], [1012, 206]])} />
      <polygon points={pts([[1011, 1149], [1017, 1149], [1028, 1178], [1046, 1214], [1066, 1246], [1082, 1282], [1101, 1302], [1102, 1250], [1109, 1250], [1111, 1285], [1117, 1322], [1117, 1378], [1106, 1378], [1090, 1366], [1062, 1334], [1033, 1318], [1033, 1292], [1064, 1290], [1048, 1256], [1028, 1224], [1012, 1186]])} />
      <polygon points={pts([[1075, 1474], [1098, 1466], [1101, 1458], [1135, 1456], [1135, 1477], [1105, 1482], [1090, 1490], [1088, 1508], [1075, 1509]])} />
      <g fill="none" strokeWidth="4">
        <polyline points={pts([[1121, 330], [1121, 361]])} />
        <polyline strokeWidth="5" points={pts([[1118, 444], [1121, 504], [1124, 538]])} />
        <polyline points={pts([[1108, 685], [1107, 820]])} />
        <polyline points={pts([[1112, 868], [1109, 996]])} />
        <polyline points={pts([[1105, 1110], [1101, 1164]])} />
      </g>
    </g>
  );
};

/* ---------- order ticket ---------- */

const Spinner = ({ label }) => (
  <div className="flex h-[23px] w-[45px] overflow-hidden rounded-sm border border-[#8fa0aa] bg-white">
    <input aria-label={label} defaultValue="0" className="min-w-0 flex-1 bg-white pr-0.5 text-right outline-none" />
    <div className="flex w-[15px] flex-col border-l border-[#8fa0aa] bg-[#dbe9ef]">
      <button aria-label={`${label} plus`} className="flex flex-1 items-center justify-center border-b border-[#8fa0aa]">
        <svg width="5" height="3" viewBox="0 0 5 3" aria-hidden="true"><path d="M0 3h5L2.500 0z" /></svg>
      </button>
      <button aria-label={`${label} moins`} className="flex flex-1 items-center justify-center">
        <svg width="5" height="3" viewBox="0 0 5 3" aria-hidden="true"><path d="M0 0h5L2.500 3z" fill="#8e9ca5" /></svg>
      </button>
    </div>
  </div>
);

const PointsField = ({ label }) => (
  <div className="flex items-center gap-0.5">
    <input
      aria-label={label}
      defaultValue="10"
      disabled
      className="h-[22px] w-[18px] rounded-xs border border-[#8fa0aa] text-center text-[#98a2a9]"
    />
    <span>pts</span>
  </div>
);

const Check = ({ label }) => (
  <label className="flex items-center gap-1">
    <input type="checkbox" className="h-3 w-3 appearance-none rounded-xs border border-[#8fa0aa] bg-white" />
    {label}
  </label>
);

const OrderTicket = () => (
  <section className="flex min-h-0 min-w-0 flex-col bg-[#e5edf3]">
    <header className={headerClass}>
      <HeaderLeft />
      <WindowButtons pin />
    </header>
    <div className="grid min-h-0 flex-1 grid-cols-[100px_minmax(0,1fr)_100px] grid-rows-[264fr_205fr]">
      <div className="flex items-center overflow-hidden border-r border-b border-[#93a3ad] pl-2 whitespace-nowrap">
        <span className="w-[30px]">Or...</span>
        <span className="font-bold">0</span>
        <button aria-label="Annuler les ordres" className="ml-1">
          <svg width="13" height="12" viewBox="0 0 13 12" aria-hidden="true">
            <path d="M0.500 0.500h12v11h-12z" fill="#d2d2cf" stroke="#a9a9a6" />
            <path d="M3 3l7 6M10 3L3 9" stroke="#8d8d8d" strokeWidth="2" />
          </svg>
        </button>
        <span className="ml-2">/</span>
        <span className="ml-1 font-bold">0</span>
        <svg className="ml-0.5" width="3" height="9" viewBox="0 0 3 9" aria-hidden="true">
          <path d="M3 0v9L0 4.500z" fill="#2b7fd6" />
        </svg>
      </div>
      <div className="flex min-h-0 flex-col items-center border-b border-[#93a3ad]">
        <label className="mt-16 flex flex-col items-center gap-0.5 pl-2.5">
          Qté
          <input defaultValue="0.5" className="h-[37px] w-[78px] rounded-xs border border-[#8fa0aa] bg-white pr-0.5 text-right text-[21px] outline-none" />
        </label>
        <div className="mt-2.5 flex w-full items-center pr-3 pl-[17px]">
          <Check label="S" />
          <span className="w-2.5" />
          <PointsField label="Points de stop" />
          <span className="flex-1" />
          <Check label="Limite" />
          <span className="w-2" />
          <PointsField label="Points de limite" />
        </div>
        <div className="mt-auto flex w-[186px] justify-between border-t border-[#93a3ad] pt-2.5 pr-5 pb-[11px] pl-4">
          <Spinner label="Ticks de stop" />
          <Spinner label="Ticks de limite" />
        </div>
      </div>
      <div className="border-b border-l border-[#93a3ad]" />
      <button className="flex min-w-0 flex-col items-start overflow-hidden border-r-2 border-[#93a3ad] bg-[#eabcbc] whitespace-nowrap">
        <span className="mt-2.5 text-[21px] leading-[24px]">Vendre ...</span>
        <span className="mt-[59px] -ml-0.5 text-[27px] leading-[32px]">35 208,3</span>
      </button>
      <div className="flex min-w-0 flex-col text-[#8f999f]">
        <div className="grid h-[27px] grid-cols-2 border-b border-[#93a3ad]">
          <button className="border-r border-[#93a3ad]">Stop à 0 ticks</button>
          <button>Limite à 0 ticks</button>
        </div>
        <div className="flex flex-1 items-center justify-center">Pas de position</div>
      </div>
      <button className="flex min-w-0 flex-col items-start overflow-hidden border-l-2 border-[#93a3ad] bg-[#aacfaa] whitespace-nowrap">
        <span className="mt-2.5 text-[21px] leading-[24px]">Acheter ...</span>
        <span className="mt-[59px] -ml-0.5 text-[27px] leading-[32px]">35 218,1</span>
      </button>
    </div>
    <div className="flex h-[28px] shrink-0 border-y border-[#93a3ad]">
      <button aria-label="Disposition" className="flex w-[25px] items-center justify-center border-r border-[#93a3ad]">
        <GridMenuIcon />
      </button>
      <button className="flex-[150] border-r border-[#93a3ad] text-[#8f999f]">Inverser position</button>
      <button className="flex-[184] border-r border-[#93a3ad] text-[#8f999f]">Pas d'ordres en attente</button>
      <div className="flex w-[49px] items-center justify-around">
        <button aria-label="Trading sur graphique"><MiniChartIcon /></button>
        <button aria-label="Réglages du carnet"><BookWrenchIcon /></button>
      </div>
    </div>
    <footer className="flex h-[18px] shrink-0 items-center bg-linear-to-b from-[#c9dbe3] to-[#e9f5f9] pl-[58px]">
      <span>Offre</span>
      <span className="ml-0.5 flex items-center"><BlueArrow /><b>0</b></span>
      <span className="ml-[57px] flex items-center"><b>0</b><span className="w-0.5" /><BlueArrow left /></span>
      <span className="ml-0.5">Demande</span>
    </footer>
  </section>
);

/* ---------- pivot window ---------- */

const pivotHeaderButton = "flex h-full items-center gap-1 border-l border-[#9aabb5] px-1 whitespace-nowrap";

const PivotWindow = () => (
  <section className="flex min-h-0 min-w-0 flex-col bg-white">
    <header className={headerClass}>
      <div className="ml-auto flex h-full items-center">
        <button aria-label="Dessiner" className="flex h-full w-[25px] items-center justify-center border-l border-[#9aabb5] bg-[#b2bfc7]">
          <PencilIcon />
        </button>
        <button aria-label="Alerte" className="flex h-full w-[25px] items-center justify-center border-l border-[#9aabb5]">
          <FlagIcon />
        </button>
        <button className={pivotHeaderButton}>Trade PP</button>
        <button className={pivotHeaderButton}>
          <svg width="9" height="15" viewBox="0 0 9 15" aria-hidden="true">
            <path d="M0.500 0.500h8v14h-8z" fill="#48cf55" stroke="#6a93a8" />
            <path d="M0 5h9M0 10h9" stroke="#2a8b35" />
          </svg>
          Push+
        </button>
        <button className={pivotHeaderButton}>
          <span className="h-[10px] w-[10px] border border-[#6a93a8] bg-[#8be68f]" />
          DealThru
        </button>
        <div className="flex h-full items-center gap-1 border-l border-[#9aabb5] pr-1.5 pl-1">
          <button aria-label="Réglages"><WrenchBoxIcon /></button>
          <button aria-label="Épingler"><PinIcon /></button>
          <button aria-label="Réduire"><MinIcon /></button>
          <button aria-label="Fermer" className="ml-1"><CloseIcon /></button>
        </div>
      </div>
    </header>
    <div className="h-[31px] shrink-0 border-b border-[#66737c] bg-[#c9dbe4]" />
    <Chart
      id="pivot"
      dom={{ x0: 76, x1: 1447, y0: 171, y1: 1483, w: 585, h: 437 }}
      bw={11}
      candles={mainCandles}
      sidebar={<Sidebar tools={ALL_TOOLS.slice(1)} />}
      levels={[
        [171, GRAY, "dash"], [349, ORANGE, "dash"], [526, GRAY, "dash"], [657, BLUE], [703, GRAY, "dash"],
        [880, GRAY, "dash"], [902, "#ff0000"], [1057, GRAY, "dash"], [1234, ORANGE, "dash"],
        [1306, BLUE, "dash"], [1411, GRAY, "dash"],
      ]}
      lines={[[76, 492, 1447, 233, GREEN, 2], [294, 841, 1447, 790, "#000", 5]]}
      labels={[
        [1372, 339, "35 500", ORANGE], [1372, 516, "35 450", GRAY], [1375, 645, "R2S", BLUE],
        [1372, 693, "35 400", GRAY], [1372, 870, "35 350", GRAY], [1376, 892, "R1M", "#ff0000"],
        [1372, 1047, "35 300", GRAY], [1372, 1224, "35 250", ORANGE], [1375, 1296, "R2SMid", BLUE],
        [1372, 1401, "35 200", GRAY], [805, 669, "2", "#000"],
      ]}
      info={{ x: 1303, y: 173, step: 45 }}
      marks={(s) => (
        <g>
          <path d={`M${s.px(787)} ${s.py(469)}v7l5-3.500z`} fill="#25b325" stroke="#107010" strokeWidth="0.600" />
          <path d={`M${s.px(825)} ${s.py(490)}v7l-5-3.500z`} fill="#e24a4a" stroke="#a02020" strokeWidth="0.600" />
          <OrderMark x={s.px(806)} y={s.py(635)} />
        </g>
      )}
      prices={[
        [279, "35 350"], [456, "35 300"], [633, "35 250"], [812, "35 200"], [988, "35 150"], [1165, "35 100"], [1342, "35 050"],
      ]}
      curTick={757}
      tags={{ y: 713, last: "35 216,2" }}
      times={[
        [150, "09:00"], [264, "13:00"], [379, "17:00"], [491, "21:00"], [577, "21", true], [606, ""], [718, "05:00"],
        [833, "09:00"], [945, "13:00"], [1060, "17:00"], [1176, ""], [1230, "24", true], [1343, "05:00"],
      ]}
    />
    <Toolbar thumb={16} />
  </section>
);

/* ---------- page ---------- */

export default function App() {
  return (
    <main className="grid h-screen grid-rows-[minmax(0,537fr)_minmax(0,539fr)] gap-0.5 bg-[#66737c] p-px font-['Liberation_Sans',Arial,sans-serif] text-[11px] leading-[13px] text-black">
      <div className="grid min-h-0 grid-cols-[583fr_664fr_667fr] gap-0.5">
        <ChartWindow
          id="day"
          frame="1 jour"
          span="3 mois"
          dom={{ x0: 84, x1: 1415, y0: 78, y1: 1483, w: 501, h: 468 }}
          bw={5}
          candles={dailyCandles}
          legend={[["ha", "Heikin-Ashi"], ["box", "FuturesBrouillonV3 (2 1 1 1 4 -59 -15 2 2 0)"], [null, "Autres"]]}
          lines={[[84, 1248, 1415, 178, GREEN, 2], [553, 1482, 1415, 793, GREEN, 2]]}
          labels={[[1363, 434, "2", "#000"]]}
          marks={(s) => <OrderMark x={s.px(1364)} y={s.py(402)} />}
          prices={[
            [144, "35 500"], [364, "35 000", true], [582, "34 500"], [802, "34 000"], [1021, "33 500"], [1240, "33 000"],
          ]}
          curTick={257}
          tags={{ y: 217, last: "35 245,9" }}
          times={[
            [116, "24"], [176, ""], [216, "mai", true], [235, ""], [310, "08"], [368, "11"], [427, "16"], [504, "22"],
            [563, "25"], [622, ""], [660, "juin", true], [703, ""], [759, "08"], [818, "13"], [895, "19"], [953, "22"],
            [1012, "27"], [1089, "juil.", true], [1149, ""], [1204, "11"], [1273, "1"], [1343, ""], [1402, ""],
          ]}
          dayTag={[1277, "lun. 24 juil. 2023"]}
          toolbar={{ thumb: 14, fitMuted: true }}
        />
        <ChartWindow
          id="hour"
          frame="1 heure"
          span="2 semaines"
          dom={{ x0: 82, x1: 1428, y0: 78, y1: 1483, w: 582, h: 468 }}
          bw={3}
          candles={hourCandles}
          legend={[["ha", "Heikin-Ashi"], ["box", "FuturesBrouillonV3 (2 1 1 1 4 -59 -15 2 2 1)"], [null, "Autres"]]}
          lines={[
            [82, 465, 1428, 170, GREEN, 2], [108, 1482, 1428, 1196, GREEN, 2],
            [340, 805, 917, 709, "#000", 5], [315, 1051, 921, 835, "#000", 5], [1055, 334, 1275, 322, "#000", 5],
          ]}
          labels={[[1141, 350, "2", "#000"]]}
          marks={(s) => (
            <g>
              {hourSpikes.map(([x, a, b]) => (
                <path key={x} d={`M${Math.round(s.px(x)) + 0.5} ${s.py(a)}V${s.py(b)}`} stroke="#000" />
              ))}
              <OrderMark x={s.px(1143)} y={s.py(314)} />
            </g>
          )}
          prices={[
            [180, "35 400"], [472, "35 000", true], [618, "34 800"], [762, "34 600"], [909, "34 400"], [1056, "34 200"],
            [1202, "34 000", true], [1347, "33 800"],
          ]}
          curTick={316}
          tags={{ y: 269, last: "35 216,2" }}
          times={[
            [144, "11"], [266, "12"], [388, "13"], [507, "14"], [622, "17"], [738, "18"], [858, "19"], [978, "20"],
            [1101, "21"], [1216, "24"], [1331, "25"],
          ]}
          toolbar={{ thumb: 64 }}
        />
        <PivotWindow />
      </div>
      <div className="grid min-h-0 grid-cols-[753fr_408fr_753fr] gap-0.5">
        <ChartWindow
          id="quarter"
          frame="15 minutes"
          span="1 jour"
          dom={{ x0: 65, x1: 1450, y0: 82, y1: 1461, w: 671, h: 460 }}
          bw={6}
          axisH={2}
          candles={quarterCandles}
          under={drawHighlighter}
          legend={[
            ["ha", "Heikin-Ashi"], ["box", "Points pivots (4h)"], ["black", "FuturesBrouillonV3 (2 1 1 1 3 -61 -17 3 2 1)"],
            [null, "Autres"],
          ]}
          levels={[[376, ORANGE, "dash"], [742, GRAY, "dash"], [1008, BLUE], [1105, GRAY, "dash"]]}
          lines={[[65, 297, 1450, 83, GREEN, 2], [65, 1318, 1351, 1273, "#000", 5]]}
          labels={[
            [1384, 358, "35 500", ORANGE], [1384, 721, "35 450", GRAY], [1387, 987, "R2S", BLUE], [1384, 1086, "35 400", GRAY],
            [1384, 1449, "35 350", GRAY],
          ]}
          info={{ x: 1320, y: 187, step: 51 }}
          prices={[
            [156, "35 360"], [302, "35 340"], [447, "35 320"], [595, "35 300", true], [741, "35 280"], [886, "35 260"],
            [1032, "35 240"], [1175, "35 220"], [1324, "35 200", true],
          ]}
          curTick={1226}
          tags={{ y: 1180, last: "35 213,4" }}
          times={[
            [114, "17:00"], [257, "19:00"], [400, "21:00"], [543, "01:00"], [687, "03:00"], [829, "05:00"], [974, "07:00"],
            [1116, "09:00"], [1260, "11:00"], [1403, "13:00"],
          ]}
          days={[[304, "ven. 21 juil. 2023"], [544, ""], [996, "lun. 24 juil. 2023"]]}
          toolbar={{ thumb: 35, undo: true, short: true }}
        />
        <OrderTicket />
        <ChartWindow
          id="five"
          frame="5 minutes"
          span="50 unités"
          dom={{ x0: 76, x1: 1462, y0: 82, y1: 1457, w: 671, h: 458 }}
          bw={11}
          axisH={2}
          candles={fiveCandles}
          legend={[["ha", "Heikin-Ashi"], ["black", "FuturesBrouillonV3 (2 1 1 1 4 -59 -15 3 2 1)"], [null, "Autres"]]}
          levels={[[250, ORANGE, "dash"], [694, GRAY, "dash"], [1017, BLUE], [1135, GRAY, "dash"]]}
          lines={[[76, 1384, 1462, 1372, "#000", 5]]}
          labels={[
            [1395, 217, "35 500", ORANGE], [1395, 660, "35 450", GRAY], [1397, 984, "R2S", BLUE], [1395, 1101, "35 400", GRAY],
          ]}
          info={{ x: 1335, y: 175, step: 45 }}
          prices={[
            [162, "35 340"], [340, "35 320"], [517, "35 300", true], [693, "35 280"], [871, "35 260"], [1047, "35 240"],
            [1223, "35 220"],
          ]}
          curTick={1284}
          tags={{ y: 1237, last: "35 213,5" }}
          times={[[92, ""], [411, "21:00"], [728, "22:00"], [1048, "01:00"], [1366, "02:00"]]}
          days={[[562, "ven. 21 juil. 2023"], [1049, ""], [1254, "lun. 24 juil. 2023"]]}
          toolbar={{ thumb: 25 }}
        />
      </div>
    </main>
  );
}
